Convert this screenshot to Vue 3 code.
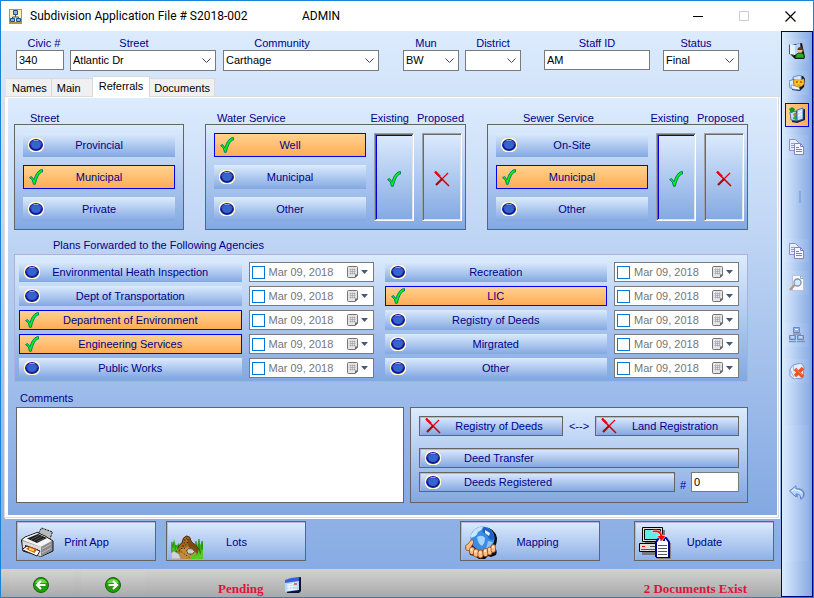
<script setup>
import { reactive, ref } from 'vue'

const fields = reactive([
  { id: 'civic', label: 'Civic #', kind: 'text', value: '340' },
  { id: 'street', label: 'Street', kind: 'select', value: 'Atlantic Dr' },
  { id: 'community', label: 'Community', kind: 'select', value: 'Carthage' },
  { id: 'mun', label: 'Mun', kind: 'select', value: 'BW' },
  { id: 'district', label: 'District', kind: 'select', value: '' },
  { id: 'staff', label: 'Staff ID', kind: 'text', value: 'AM' },
  { id: 'status', label: 'Status', kind: 'select', value: 'Final' }
])

const tabs = ['Names', 'Main', 'Referrals', 'Documents']
const activeTab = ref('Referrals')

const services = reactive([
  { id: 'road', title: 'Street', options: ['Provincial', 'Municipal', 'Private'], chosen: 'Municipal', states: false },
  { id: 'water', title: 'Water Service', options: ['Well', 'Municipal', 'Other'], chosen: 'Well', states: true },
  { id: 'sewer', title: 'Sewer Service', options: ['On-Site', 'Municipal', 'Other'], chosen: 'Municipal', states: true }
])

const agency = (name, on = false) => ({ name, on, dated: false, date: 'Mar 09, 2018' })
const agencyColumns = reactive([
  [
    agency('Environmental Heath Inspection'),
    agency('Dept of Transportation'),
    agency('Department of Environment', true),
    agency('Engineering Services', true),
    agency('Public Works')
  ],
  [
    agency('Recreation'),
    agency('LIC', true),
    agency('Registry of Deeds'),
    agency('Mirgrated'),
    agency('Other')
  ]
])

const comments = ref('')
const deedNumber = ref('0')
</script>

<template>
  <div class="window">
    <svg class="defs" aria-hidden="true">
      <symbol id="i-dot" viewBox="0 0 16 14">
        <path d="M4.500 0h7L14 1.500 16 4.500v5L14 12.500 11.500 14h-7L2 12.500 0 9.500v-5L2 1.500z" fill="#ffffcc" />
        <ellipse cx="8" cy="7" rx="7" ry="6" fill="#16169a" />
        <path d="M2 6.500Q3 2 8 2t6 4.500z" fill="#4747d2" />
        <ellipse cx="8" cy="7.200" rx="4.800" ry="3.800" fill="#3366cc" />
        <path d="M5.500 2.500h5" stroke="#8c9cec" />
      </symbol>
      <symbol id="i-check" viewBox="0 0 14 16">
        <path d="M.6 8.600 2.500 7.500 5 10.800C6 7 8.600 1.300 12.600.6h.9V3C10.500 3.500 9 7 7.600 10.500L6.200 15.300H4.500L3.300 11z" fill="#00f800" stroke="#007c7c" />
      </symbol>
      <symbol id="i-cross" viewBox="0 0 16 16">
        <path d="M1 1l14 14" stroke="#c80000" stroke-width="1.500" />
        <path d="M1 .5l5 5" stroke="#f00000" stroke-width="2.200" />
        <path d="M14 2 8.500 7.500" stroke="#f00000" stroke-width="1.300" />
        <path d="M8.500 7.500 2 14" stroke="#b00000" stroke-width="2.200" />
      </symbol>
      <symbol id="i-cal" viewBox="0 0 12 12">
        <path d="M.5 1.500q0-1 1-1h8q1 0 1 1V9L8 11.500H1.500q-1 0-1-1z" fill="#e6e6e8" stroke="#7d7070" />
        <path d="M2.500 3.500h6M2.500 5.500h6M2.500 7.500h6M3.500 2.500v6M5.500 2.500v6M7.500 2.500v6" stroke="#a7abb5" stroke-width=".8" />
        <path d="M11.500 8.500 8 12V8.500z" fill="#6b6464" />
      </symbol>
      <symbol id="i-copy" viewBox="0 0 16 16">
        <path d="M.5.500h6l3 3v8h-9z" fill="#e9eeff" stroke="#8d8fbe" />
        <path d="M2 4.500h3M2 6.500h4M2 8.500h4" stroke="#9a9cc6" />
        <path d="M5.500 4.500h6l3 3v8h-9z" fill="#f4f6ff" stroke="#8486b8" />
        <path d="M11.500 4.500v3h3M7 8.500h3M7 10.500h6M7 12.500h6" fill="none" stroke="#7c7eb2" />
      </symbol>
    </svg>

    <header class="titlebar">
      <svg class="app-icon" viewBox="0 0 13 15">
        <path d="M0 0h13v15H0z" fill="#b89632" />
        <path d="M1 1h11v12H1z" fill="#fff3b4" />
        <path d="M6.500 5v3M3.500 10V8h6v2" fill="none" stroke="#456" />
        <path d="M4.500 1.500h4v4h-4zM1.500 9.500h4v3h-4zM7.500 9.500h4v3h-4z" fill="#7eb4f4" stroke="#234b94" />
      </svg>
      <h1 class="title">Subdivision Application File # S2018-002</h1>
      <span class="user">ADMIN</span>
      <div class="controls">
        <button type="button" aria-label="Minimize"><svg viewBox="0 0 11 11"><path d="M0 5.500h10" stroke="#000" /></svg></button>
        <button type="button" aria-label="Maximize" disabled><svg viewBox="0 0 11 11"><path d="M.5.500h9v9h-9z" fill="none" stroke="#ccc" /></svg></button>
        <button type="button" aria-label="Close"><svg viewBox="0 0 11 11"><path d="M.5.500l10 10M10.500.500l-10 10" stroke="#000" stroke-width="1.200" /></svg></button>
      </div>
    </header>

    <div class="body">
      <main class="main">
        <form class="fields" @submit.prevent>
          <div v-for="f in fields" :key="f.id" class="field" :class="'field-' + f.id">
            <label :for="f.id">{{ f.label }}</label>
            <input v-if="f.kind === 'text'" :id="f.id" v-model="f.value" type="text">
            <div v-else class="select">
              <select :id="f.id" v-model="f.value"><option>{{ f.value }}</option></select>
              <svg viewBox="0 0 9 5"><path d="M.5.500l4 4 4-4" fill="none" stroke="#444" /></svg>
            </div>
          </div>
        </form>

        <nav class="tabs" role="tablist">
          <button
            v-for="t in tabs" :key="t" type="button" role="tab" class="tab"
            :class="{ active: t === activeTab }" :aria-selected="t === activeTab" @click="activeTab = t"
          >{{ t }}</button>
        </nav>

        <div class="frame">
          <section class="page">
            <div class="services">
              <section v-for="s in services" :key="s.id" class="service" :class="s.id">
                <div class="heading">
                  <h2>{{ s.title }}</h2>
                  <template v-if="s.states"><span>Existing</span><span>Proposed</span></template>
                </div>
                <div class="box service-box">
                  <div class="options">
                    <button
                      v-for="o in s.options" :key="o" type="button" class="choice"
                      :class="{ on: o === s.chosen }" :aria-pressed="o === s.chosen" @click="s.chosen = o"
                    >
                      <svg v-if="o === s.chosen" class="mark check"><use href="#i-check" /></svg>
                      <svg v-else class="mark dot"><use href="#i-dot" /></svg>
                      {{ o }}
                    </button>
                  </div>
                  <template v-if="s.states">
                    <button type="button" class="state pressed" aria-label="Existing"><svg class="check"><use href="#i-check" /></svg></button>
                    <button type="button" class="state" aria-label="Proposed"><svg class="cross"><use href="#i-cross" /></svg></button>
                  </template>
                </div>
              </section>
            </div>

            <h2 class="agencies-title">Plans Forwarded to the Following Agencies</h2>
            <div class="box agencies">
              <div v-for="(col, c) in agencyColumns" :key="c" class="agency-col">
                <div v-for="a in col" :key="a.name" class="agency">
                  <button type="button" class="choice" :class="{ on: a.on }" :aria-pressed="a.on" @click="a.on = !a.on">
                    <svg v-if="a.on" class="mark check"><use href="#i-check" /></svg>
                    <svg v-else class="mark dot"><use href="#i-dot" /></svg>
                    {{ a.name }}
                  </button>
                  <div class="date">
                    <input v-model="a.dated" type="checkbox" :aria-label="a.name + ' date set'">
                    <input v-model="a.date" type="text" :aria-label="a.name + ' date'">
                    <button type="button" :aria-label="a.name + ' calendar'">
                      <svg class="cal"><use href="#i-cal" /></svg>
                      <svg class="arrow" viewBox="0 0 7 4"><path d="M0 0h7L3.500 4z" fill="#47597d" /></svg>
                    </button>
                  </div>
                </div>
              </div>
            </div>

            <label class="comments-title" for="comments">Comments</label>
            <div class="lower">
              <textarea id="comments" v-model="comments"></textarea>
              <div class="box deeds">
                <div class="deed-row">
                  <button type="button" class="choice raised deed-half"><svg class="mark cross"><use href="#i-cross" /></svg>Registry of Deeds</button>
                  <span class="swap">&lt;--&gt;</span>
                  <button type="button" class="choice raised deed-half"><svg class="mark cross"><use href="#i-cross" /></svg>Land Registration</button>
                </div>
                <div class="deed-row transfer">
                  <button type="button" class="choice raised deed-wide"><svg class="mark dot"><use href="#i-dot" /></svg>Deed Transfer</button>
                </div>
                <div class="deed-row">
                  <button type="button" class="choice raised deed-wide"><svg class="mark dot"><use href="#i-dot" /></svg>Deeds Registered</button>
                  <label class="hash" for="deed-number">#</label>
                  <input id="deed-number" v-model="deedNumber" type="text">
                </div>
              </div>
            </div>
          </section>
        </div>

        <div class="actions">
          <button type="button" class="action print">
            <svg viewBox="0 0 33 33">
              <path d="M17.500 7 20.500 2l11 4-3 8z" fill="#b9b9b9" stroke="#111" stroke-dasharray="2 1" />
              <path d="M.5 14 3 11.500 16 6.500l8 3.500 8 5v10l-12 5.500L2 25z" fill="#8f8f8f" stroke="#111" />
              <path d="M1.500 14 4 11.500 16 7l8 3.500 7 4.500-11 6z" fill="#f3f3f3" />
              <path d="M6 12.500 17 8l9 4-10 5z" fill="#1b1b1b" />
              <path d="M10 13.500l8-4M13 14.500l8-4M16 15.500l7-3" stroke="#565656" />
              <path d="M1.500 15 20 21v9.500L2 24z" fill="#dcdcdc" />
              <path d="M20 21l11-6v9.500l-11 6z" fill="#8d8d8d" />
              <path d="M21 23l9-5M21 27l9-5" stroke="#bdbdbd" />
              <path d="M4 19l13 4.500V27L4 22z" fill="#111" />
              <path d="M1 23.500 6 20l13 5-3 5z" fill="#fff" stroke="#222" />
              <path d="M5 23l3-2.500 8 3-2.500 3.500z" fill="#e8540c" />
              <path d="M8 22.500l5 2" stroke="#ffd83a" stroke-width="2" />
            </svg>
            <span>Print App</span>
          </button>
          <button type="button" class="action lots">
            <svg viewBox="0 0 33 33">
              <path d="M0 33V15l2 4 1-6 2 7 3-3 2 8h12l3-9 1 4 2-7 1 6 3-4v18z" fill="#37b518" />
              <path d="M2 16v8M5 19v7M25 15v8M28 13v10M31 15v9" stroke="#1b7a0d" />
              <path d="M4 28 7 21q2-3 4-4l1.500-5 3-2 3 1 2 5 4 3 4 5 1 7H5z" fill="#a36a22" stroke="#3f2407" />
              <path d="M18.500 11l2 5 4 3 4 5 1 6-6-5-5-3-2-5z" fill="#7b4a12" />
              <path d="M10 29q0-7 3-11l1-5 2-1M17 13l-1 5-5 3-2 8" fill="none" stroke="#1e1202" stroke-dasharray="1 2" />
              <path d="M10 23l7-2 6 3 2 9H7z" fill="#c48a3c" />
              <path d="M8 24l12 9M13 22l9 9" stroke="#2e1c06" stroke-dasharray="1 2" />
              <path d="M15.500 25l2-2.500 4 .5 2 2.500-2 2.500h-4z" fill="#cfcfcf" stroke="#555" />
              <path d="M0 27l3-2 5 3 2 5H0z" fill="#d2d2d2" stroke="#888" stroke-width=".6" />
              <path d="M20 33l1-5 2 3 1-6 2 5 2-7 1 6 3-7v11z" fill="#4fcf22" />
              <path d="M1 24l1-4 2 5 2-5 1 5z" fill="#46c91c" />
            </svg>
            <span>Lots</span>
          </button>
          <button type="button" class="action mapping">
            <svg viewBox="0 0 33 33">
              <path d="M19 1q11 1 13 11 0 7-3 9 4 3 2 8l-5 2-3-1-3 3h-6l-4-3-5-1-1-5-4-2z" fill="#0a0a10" />
              <circle cx="17.500" cy="12.500" r="12" fill="#3b8ce8" />
              <path d="M6 9Q9 1 18 .8q-1 4-5 5-1 5-7 6z" fill="#c8e6ff" />
              <path d="M19 1q9 2 10.500 11-3 4-6 0-1-4-5-5-2-3 .5-6z" fill="#1a62c4" />
              <path d="M12 11q5-3 8 1 0 5-3 8-4-2-5-9z" fill="#a5d5fb" />
              <path d="M20 4l5 3-1 3-4-3z" fill="#e4f4ff" />
              <path d="M23 15l5 1-3 5-4 2z" fill="#8cc6f8" />
              <g fill="#f6c08c" stroke="#a5460d" stroke-width=".8">
                <path d="M.5 19.500 3 18l3-4h2.500v3L6 21l2 3-2 1-5-1z" />
                <rect x="4.500" y="21" width="5" height="7.500" rx="2.400" />
                <rect x="8.500" y="23" width="5" height="8" rx="2.400" />
                <rect x="13" y="24" width="5" height="8" rx="2.400" />
                <rect x="18" y="22.500" width="5" height="8" rx="2.400" />
                <rect x="22.500" y="21" width="4.500" height="8" rx="2.200" />
                <rect x="26" y="18.500" width="4.500" height="8" rx="2.200" />
              </g>
              <path d="M6.500 22.500v2M10.500 24.500v2M15 25.500v2M20 24v2M24.500 22.500v2M28 20v2" stroke="#fff2dc" stroke-width="1.600" />
            </svg>
            <span>Mapping</span>
          </button>
          <button type="button" class="action update">
            <svg viewBox="0 0 33 33">
              <path d="M6 4h20v14H6zM3 20h24v9H3z" fill="#777" />
              <path d="M3.500 1.500h20v14h-20z" fill="#dedede" stroke="#000" />
              <path d="M5.500 3.500h16v10h-16z" fill="#63eaea" stroke="#000" />
              <path d="M.5 17.500h23v8H.5z" fill="#dedede" stroke="#000" />
              <path d="M11 20.500h10M2 23.500h19" stroke="#555" />
              <path d="M3 20.500h3" stroke="#e00000" />
              <path d="M18 17h14v16H18z" fill="#858585" />
              <path d="M16.500 16 19.500 13h8l3 3v15h-14z" fill="#fff" />
              <path d="M17 31V16l3-4h2v3M30 31V16l-3-4h-2v3" fill="none" stroke="#000094" stroke-width="2" />
              <path d="M19 19.500h9M19 22.500h9M19 25.500h9M19 28.500h9" stroke="#555" />
              <path d="M17 31.500h14" stroke="#000" />
              <path d="M13 4.500q9-2 10.500 5h3.500l-4.500 6-4.500-6h3q-1-4-7.500-3z" fill="#f00" stroke="#fff" stroke-width=".6" />
            </svg>
            <span>Update</span>
          </button>
        </div>

        <footer class="statusbar">
          <button type="button" class="nav-btn" aria-label="Previous">
            <svg viewBox="0 0 16 16"><circle cx="8" cy="8" r="7.500" fill="#229c0b" stroke="#126906" /><path d="M2 6q2-4 6-4t6 4z" fill="#72d34c" /><path d="M12.500 8H4.500M8 4 4 8l4 4" fill="none" stroke="#fff" stroke-width="2.200" /></svg>
          </button>
          <button type="button" class="nav-btn" aria-label="Next">
            <svg viewBox="0 0 16 16"><circle cx="8" cy="8" r="7.500" fill="#229c0b" stroke="#126906" /><path d="M2 6q2-4 6-4t6 4z" fill="#72d34c" /><path d="M3.500 8h8M8 4l4 4-4 4" fill="none" stroke="#fff" stroke-width="2.200" /></svg>
          </button>
          <strong class="pending">Pending</strong>
          <button type="button" class="schedule" aria-label="Schedule">
            <svg viewBox="0 0 16 16">
              <path d="M3 2 16 0v14l-2 2H2z" fill="#0c1233" />
              <path d="M0 3 6 1l8-1v13L0 15z" fill="#b9d6fb" />
              <path d="M0 3l6-2 8-1v4L0 6z" fill="#3463d8" />
              <path d="M2 8l10-2M2 10l10-1M2 13l10-1M4 7v7M7 7v6" stroke="#f4f9ff" />
              <path d="M9 6h3v2H9z" fill="#ec675d" />
            </svg>
          </button>
          <strong class="documents">2 Documents Exist</strong>
        </footer>
      </main>

      <aside class="toolbar">
        <button type="button" class="tool" aria-label="Applicant">
          <svg viewBox="0 0 16 16">
            <path d="M2 2 13 0l1 5 2 9-1 2H6L2 12z" fill="#151515" />
            <path d="M0 2l1-1v10l4 1v1l-5-2z" fill="#7c4f20" />
            <path d="M1 1l5 1v10l-5-1z" fill="#e6f2ff" /><path d="M6 2l5-2 1 8-6 4z" fill="#b4d3fc" />
            <circle cx="11" cy="7.500" r="2.500" fill="#f0bd84" /><path d="M8.500 7q0-3 3-3t2 3z" fill="#5c3a14" />
            <path d="M6.500 15q0-5 4.500-5t4 5z" fill="#2cab24" stroke="#0a4f0a" stroke-width=".7" />
          </svg>
        </button>
        <button type="button" class="tool" aria-label="Contacts">
          <svg viewBox="0 0 16 16">
            <path d="M4 3l10-2 2 3-1 8-4 4-8-1z" fill="#111a30" />
            <path d="M0 6l5-2 1 10-5-1zM4 2l8-2 1 9-8 3z" fill="#d9eaff" stroke="#4b76be" stroke-width=".8" />
            <path d="M2 10l8 2 1 3-8-1z" fill="#eef6ff" stroke="#5f86c4" stroke-width=".6" />
            <path d="M5 4.500l5 .5 5-1v5q-2 3-5 3-4 0-5-3z" fill="#ffc52a" stroke="#c07a08" stroke-width=".6" />
            <path d="M7 7h2M11 7h2" stroke="#db3b00" stroke-width="1.500" /><path d="M8.500 10h3" stroke="#d88a00" />
          </svg>
        </button>
        <button type="button" class="tool selected" aria-label="Referrals">
          <svg viewBox="0 0 16 16">
            <path d="M3 5l13-3v11l-8 3-5-1z" fill="#14203c" />
            <path d="M1 5l6-1 1 10-6-1zM8 3l6-2v11l-6 2z" fill="#c5e0ff" stroke="#315d95" stroke-width=".8" />
            <path d="M0 2l3-2 3 2-1 3-3 1z" fill="#129a1c" />
            <circle cx="6" cy="7.500" r="1.700" fill="#ad7542" /><path d="M4 12q0-3 3-3v4z" fill="#26ae29" />
            <path d="M9 6l4-2M9 9l4-2" stroke="#fff" />
          </svg>
        </button>
        <button type="button" class="tool" aria-label="Copy"><svg><use href="#i-copy" /></svg></button>
        <span class="separator"></span>
        <button type="button" class="tool" aria-label="Copy file"><svg><use href="#i-copy" /></svg></button>
        <button type="button" class="tool" aria-label="Preview">
          <svg viewBox="0 0 16 16">
            <path d="M3.500.500h8l3 3v12h-11z" fill="#f5f8ff" stroke="#b9c2d8" /><path d="M11.500.500v3h3" fill="none" stroke="#9aa5c0" />
            <circle cx="8.500" cy="7.500" r="3.500" fill="#d5eaff" stroke="#8193b0" stroke-width="1.300" /><path d="M5.500 10 1 15" stroke="#b3957c" stroke-width="2.200" />
          </svg>
        </button>
        <button type="button" class="tool network" aria-label="Network">
          <svg viewBox="0 0 16 16">
            <path d="M4.500.500h6v5h-6zM.5 8.500h6v4h-6zM8.500 8.500h6v4h-6z" fill="#8fb7f2" stroke="#7d83a6" />
            <path d="M6 2.500h3M2 10h3M10 10h3" stroke="#e9f6ff" /><path d="M4 7h8M0 14.500h7M8 14.500h8" stroke="#8b90aa" stroke-width="1.600" />
          </svg>
        </button>
        <button type="button" class="tool delete" aria-label="Delete">
          <svg viewBox="0 0 16 16">
            <path d="M1 6l3-4 8-2 3 4-1 11-9 1-4-3z" fill="#e2edff" stroke="#7b96cf" /><path d="M4 2l1 6M1 7l4 7" stroke="#9db6e4" />
            <path d="M6 6l8 8M14 5 6 13" stroke="#ea5424" stroke-width="3.400" /><path d="M7 6l6 6" stroke="#ff8453" />
          </svg>
        </button>
        <button type="button" class="tool undo" aria-label="Undo">
          <svg viewBox="0 0 16 16">
            <path d="M2 7l7 6V9q4 0 3 6 6-4 3-9-2-3-6-3z" fill="#777f99" opacity=".6" />
            <path d="M.5 6 7 .800V4q6 0 7.500 4 1 4-3 6 1-5-4.500-5v3z" fill="#b5d5fd" stroke="#5c7fcb" />
            <path d="M3 6l3-2v1q5 0 7 3" fill="none" stroke="#f0f8ff" />
          </svg>
        </button>
      </aside>
    </div>
  </div>
</template>

<style>
body {
  margin: 0;
}
</style>

<style scoped>
* {
  box-sizing: border-box;
}
.window {
  --navy: #00008b;
  --pale: #dcebfd;
  --deep: #83a8e2;
  --fall: linear-gradient(var(--pale), var(--deep));
  display: flex;
  flex-direction: column;
  min-height: 100vh;
  border: 1px solid #1883d7;
  background: #fff;
  color: var(--navy);
  font: 11px/14px "Liberation Sans", sans-serif;
}
.defs {
  position: absolute;
  width: 0;
  height: 0;
}
button,
input,
select,
textarea {
  margin: 0;
  padding: 0;
  border: 0;
  border-radius: 0;
  color: inherit;
  background: none;
  font: inherit;
}
svg {
  display: block;
  flex: none;
}
h1,
h2 {
  margin: 0;
  font: inherit;
}

/* Title bar */
.titlebar {
  display: flex;
  align-items: center;
  height: 30px;
  padding-left: 8px;
  color: #000;
  font: 12px/16px Roboto, sans-serif;
}
.app-icon {
  width: 13px;
  height: 15px;
}
.title {
  width: 280px;
  padding-left: 8px;
  white-space: nowrap;
}
.controls {
  display: flex;
  margin-left: auto;
}
.controls button {
  display: grid;
  place-items: center;
  width: 46px;
  height: 30px;
}
.controls svg {
  width: 11px;
  height: 11px;
}

.body {
  display: flex;
  flex: 1;
}
.main {
  display: flex;
  flex: 1;
  flex-direction: column;
  min-width: 0;
  background: var(--fall);
}

/* Application fields */
.fields {
  display: flex;
  gap: 6px;
  padding: 6px 42px 5px 15px;
}
.field {
  display: flex;
  flex: 1 1 56px;
  flex-direction: column;
  min-width: 0;
  height: 34px;
}
.field-civic { flex-basis: 48px; }
.field-street { flex-basis: 146px; }
.field-community { flex-basis: 156px; margin-left: 1px; }
.field-mun { margin-left: 18px; }
.field-staff { flex-basis: 106px; margin-left: 17px; }
.field-status { flex-basis: 76px; margin-left: 7px; }
.field label {
  line-height: 13px;
  text-align: center;
}
.field-civic label {
  padding-left: 8px;
}
.field-street label {
  padding-right: 18px;
}
.field-community label {
  padding-right: 38px;
}
.field-mun label,
.field-status label {
  padding-right: 10px;
}
.field input,
.select select {
  width: 100%;
  height: 20px;
  padding: 0 2px 1px;
  border: 1px solid #7a7a7a;
  color: #000;
  background: #fff;
}
.select {
  display: grid;
  align-items: center;
}
.select select {
  grid-area: 1 / 1;
  height: 21px;
  appearance: none;
}
.select svg {
  grid-area: 1 / 1;
  justify-self: end;
  width: 9px;
  height: 5px;
  margin-right: 5px;
  pointer-events: none;
}

/* Tabs */
.tabs {
  display: flex;
  align-items: flex-end;
  height: 20px;
  padding-left: 5px;
}
.tab {
  height: 18px;
  padding: 0 4px;
  border: 1px solid #d9d9d9;
  border-width: 1px 1px 0 0;
  color: #000;
  background: #f0f0f0;
}
.tab:first-child {
  padding-left: 6px;
}
.tab:nth-child(2) {
  padding: 0 11px 0 5px;
}
.tab.active {
  height: 21px;
  margin-bottom: -1px;
  padding: 0 6px 3px;
  background: #fff;
  z-index: 1;
}
.frame {
  display: flex;
  flex: 1;
  margin: 0 2px 0 3px;
  padding: 1px 1px 2px 3px;
  border: 1px solid #dcdcdc;
  background: #fff;
  box-shadow: 1px 1px #fff;
}
.page {
  flex: 1;
  min-width: 0;
  padding: 14px 29px 12px 6px;
  background: var(--fall);
}
.box {
  border: 1px solid #646464;
  background: var(--fall);
}

/* Service groups */
.services {
  display: grid;
  grid-template-columns: 170fr 261fr 261fr;
  gap: 21px;
}
.heading {
  display: flex;
  gap: 8px;
  padding: 0 2px 0 12px;
  line-height: 12px;
}
.heading h2 {
  flex: 1;
}
.road .heading {
  padding-left: 16px;
}
.sewer .heading {
  padding-left: 36px;
  padding-right: 4px;
}
.service-box {
  display: flex;
  gap: 8px;
  padding: 8px;
}
.water .service-box,
.sewer .service-box {
  padding-right: 3px;
}
.options {
  display: grid;
  flex: 1;
  gap: 8px;
}
.choice {
  display: grid;
  place-items: center;
  position: relative;
  height: 24px;
  background: var(--fall);
}
.choice.on {
  border: 1px solid #0000f0;
  background: linear-gradient(#ffd190, #ffad55);
}
.mark {
  position: absolute;
  top: 0;
  bottom: 0;
  left: 5px;
  margin: auto 0;
}
.dot {
  width: 16px;
  height: 14px;
}
.check {
  width: 14px;
  height: 16px;
}
.cross {
  width: 16px;
  height: 16px;
}
.state {
  display: grid;
  place-items: center;
  width: 40px;
  height: 88px;
  padding-top: 4px;
  border: 1px solid;
  border-color: #a0a0a0 #fff #fff #a0a0a0;
  background: var(--fall);
  box-shadow: inset 1px 1px #696969, inset -1px -1px #e3e3e3;
}
.state.pressed {
  box-shadow: inset 1px 1px #696969, inset -1px -1px #e3e3e3, inset 2px 2px #0000e0;
}

/* Agencies */
.agencies-title {
  padding: 8px 0 2px 39px;
}
.agencies {
  display: grid;
  grid-template-columns: 1fr 1fr;
  gap: 11px;
  padding: 7px 8px 3px 4px;
  border-color: #aeb0d8;
}
.agency-col {
  display: grid;
  gap: 4px;
}
.agency {
  display: flex;
  gap: 7px;
}
.agency .choice {
  flex: 1;
  height: 20px;
}
.date {
  display: flex;
  align-items: center;
  width: 125px;
  height: 20px;
  padding: 0 5px 0 2px;
  border: 1px solid #7a7a7a;
  color: #767676;
  background: #fff;
}
.date [type="checkbox"] {
  flex: none;
  width: 13px;
  height: 13px;
  border: 1px solid #0078d7;
  appearance: none;
}
.date [type="checkbox"]:checked {
  background: #0078d7;
}
.date [type="text"] {
  flex: 1;
  min-width: 0;
  padding-left: 4px;
}
.date button {
  display: flex;
  gap: 2px;
  align-items: center;
}
.cal {
  width: 12px;
  height: 12px;
}
.arrow {
  width: 7px;
  height: 4px;
}

/* Comments and deeds */
.comments-title {
  display: block;
  padding: 9px 0 2px 6px;
}
.lower {
  display: grid;
  grid-template-columns: 388fr 338fr;
  gap: 6px;
  height: 96px;
  padding-left: 2px;
}
textarea {
  border: 1px solid #646464;
  color: #000;
  background: #fff;
  resize: none;
}
.deeds {
  display: flex;
  flex-direction: column;
  gap: 4px;
  padding: 8px;
}
.deed-row {
  display: flex;
}
.transfer {
  padding-top: 8px;
}
.raised {
  height: 20px;
  border: 1px solid #646464;
  box-shadow: inset 1px 1px #b4b4dc;
}
.deed-half {
  flex: 1;
  padding-left: 16px;
}
.deed-wide {
  flex: 1;
  justify-items: start;
  padding-left: 44px;
}
.swap {
  width: 32px;
  line-height: 20px;
  text-align: center;
}
.hash {
  width: 16px;
  padding-top: 6px;
  text-align: center;
}
#deed-number {
  width: 48px;
  height: 20px;
  padding: 0 2px;
  border: 1px solid #7a7a7a;
  color: #000;
  background: #fff;
}

/* Action buttons */
.actions {
  display: flex;
  gap: 10px;
  padding: 3px 7px 8px 15px;
}
.action {
  display: flex;
  align-items: center;
  width: 140px;
  height: 40px;
  padding: 2px 4px 0;
  border: 1px solid #646464;
  background: linear-gradient(var(--pale), #8fb0e6);
  box-shadow: inset 1px 1px #b4b4dc;
}
.action svg {
  width: 33px;
  height: 33px;
}
.action span {
  flex: 1;
  padding-right: 32px;
  text-align: center;
}
.mapping {
  margin-left: auto;
}
.mapping span {
  padding-right: 18px;
}
.update {
  margin-left: 24px;
}

/* Status bar */
.statusbar {
  display: flex;
  align-items: center;
  height: 28px;
  padding: 0 34px 0 8px;
  color: #dc143c;
  background: linear-gradient(#d2d2d2, #a9a9a9);
  font: bold 13px/16px "Liberation Serif", serif;
}
.nav-btn {
  display: grid;
  place-items: center;
  width: 64px;
  height: 24px;
  margin-right: 8px;
  padding-top: 3px;
  background: linear-gradient(#d2d2d2, #adadad);
}
.nav-btn svg,
.schedule svg {
  width: 16px;
  height: 16px;
}
.pending {
  padding: 12px 0 0 65px;
}
.schedule {
  margin-left: 21px;
  padding-top: 4px;
}
.documents {
  margin-left: auto;
  padding-top: 12px;
}

/* Side toolbar */
.toolbar {
  display: flex;
  flex: none;
  flex-direction: column;
  gap: 8px;
  width: 32px;
  padding: 7px 3px;
  border: 1px solid #00007f;
  background: linear-gradient(90deg, var(--pale), var(--deep));
}
.tool {
  display: grid;
  place-items: center;
  height: 24px;
  background: linear-gradient(90deg, #d5e6fc, #92b3e8);
}
.tool svg {
  width: 16px;
  height: 16px;
}
.tool.selected {
  border: 1px solid #0000f0;
  background: linear-gradient(90deg, #ffd190, #ffad55);
}
.separator {
  width: 2px;
  height: 12px;
  margin: 24px 8px 28px 14px;
  background: #83a8e2;
}
.network {
  margin-top: 20px;
}
.delete {
  margin-top: 4px;
}
.undo {
  height: 136px;
  margin-top: 34px;
}
</style>
